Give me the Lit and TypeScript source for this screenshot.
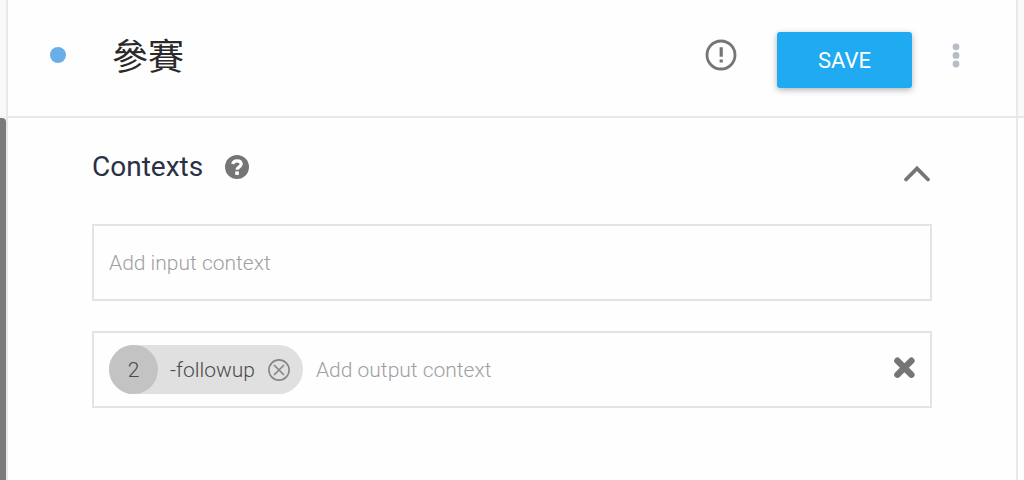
import { LitElement, html, css, svg } from "lit";
import { customElement, property } from "lit/decorators.js";

const icons = {
  error: svg`<circle cx="16" cy="16" r="14" fill="none" stroke="#757575" stroke-width="2.800"/>
    <path d="M14.600 8.300h3.200v9.500h-3.200zM14.600 20.5h3.200v3h-3.200z" fill="#757575"/>`,
  more: svg`<g fill="#b7bcc6"><circle cx="16" cy="7.800" r="3.400"/><circle cx="16" cy="16.400" r="3.400"/><circle cx="16" cy="25" r="3.400"/></g>`,
  chevron: svg`<path d="M5 21.5 16 10.500 27 21.5" fill="none" stroke="#757575" stroke-width="3.800" stroke-linecap="round"/>`,
};

@customElement("context-chip")
export class ContextChip extends LitElement {
  @property() lifespan = "";
  @property() name = "";

  static styles = css`
    :host { display: flex; align-items: center; height: 49px; border-radius: 25px; background: #e0e0e0; color: #4a4a4a; }
    .lifespan { display: grid; place-items: center; width: 49px; height: 49px; border-radius: 50%; background: #c3c3c3; }
    .name { margin: 0 13px 0 12px; white-space: nowrap; }
    .remove { display: block; margin: 0 13px 0 0; padding: 0; border: 0; background: none; cursor: pointer; }
    .remove svg { display: block; }
  `;

  render() {
    return html`
      <span class="lifespan">${this.lifespan}</span>
      <span class="name">${this.name}</span>
      <button class="remove" aria-label="Remove ${this.name}">
        <svg width="22" height="22" viewBox="0 0 22 22" fill="none" stroke="#858585" stroke-width="1.6">
          <circle cx="11" cy="11" r="10.100"/>
          <path d="M6 6l10 10M16 6L6 16"/>
        </svg>
      </button>
    `;
  }
}

@customElement("app-root")
export class AppRoot extends LitElement {
  static styles = css`
    * { box-sizing: border-box; }
    :host {
      display: grid;
      grid-template-columns: 6px 1fr 6px;
      grid-template-rows: auto 1fr;
      min-height: 100vh;
      background: #fefefe;
      font-family: Roboto, "Noto Sans CJK TC", sans-serif;
      font-size: 22px;
      line-height: 28px;
    }
    svg { display: block; }
    button { font: inherit; }
    .edge { border-bottom: 2px solid #e8e8e8; background: #f9f9f9; }
    .edge.start { border-bottom-color: #f2f2f2; }
    .rail { background: #7b7b7b; border-radius: 0 4px 0 0; }
    .bar {
      display: flex;
      align-items: center;
      height: 118px;
      padding: 0 44px 6px 42px;
      border: solid #e8e8e8;
      border-width: 0 2px 2px;
    }
    .status { width: 16px; height: 16px; margin-right: 46px; border-radius: 50%; background: #69aee6; }
    .title { flex: 1; margin: 0; padding-top: 6px; font-size: 36px; line-height: 48px; font-weight: 400; color: #2a2a2a; }
    .plain { padding: 0; border: 0; background: none; cursor: pointer; }
    .save {
      width: 135px;
      height: 56px;
      margin: 10px 28px 0 40px;
      padding: 2px 0 0;
      border: 0;
      border-radius: 3px;
      background: #20aaf2;
      color: #fff;
      box-shadow: 0 2px 6px rgba(0, 0, 0, 0.3);
      cursor: pointer;
    }
    .content { padding: 31px 84px 40px; border: solid #e8e8e8; border-width: 0 2px; }
    .head { display: flex; align-items: center; height: 36px; margin-bottom: 39px; }
    .heading { margin: 0 22px 0 0; font-size: 28px; line-height: 36px; font-weight: 400; color: #2b3144; }
    .toggle { margin: 14px 0 0 auto; }
    .field {
      display: flex;
      align-items: center;
      gap: 13px;
      height: 77px;
      margin-bottom: 30px;
      padding: 0 15px;
      border: 2px solid #e3e4e5;
      font-size: 21px;
      font-weight: 300;
    }
    .input { flex: 1; min-width: 0; padding: 0; border: 0; outline: 0; background: none; font: inherit; color: #4a4a4a; }
    .input::placeholder { color: #a0a0a0; opacity: 1; }
  `;

  render() {
    return html`
      <div class="edge start"></div>
      <header class="bar">
        <span class="status"></span>
        <h1 class="title" lang="zh-Hant">參賽</h1>
        <button class="plain" aria-label="Issues">
          <svg width="32" height="32" viewBox="0 0 32 32">${icons.error}</svg>
        </button>
        <button class="save">SAVE</button>
        <button class="plain" aria-label="More options">
          <svg width="32" height="32" viewBox="0 0 32 32">${icons.more}</svg>
        </button>
      </header>
      <div class="edge"></div>
      <div class="rail"></div>
      <main class="content">
        <div class="head">
          <h2 class="heading">Contexts</h2>
          <button class="plain" aria-label="Help">
            <svg width="24" height="24" viewBox="0 0 24 24">
              <circle cx="12" cy="12" r="12" fill="#757575"/>
              <path d="M7.600 9.100C8.300 6.900 9.800 5.800 12 5.800c2.500 0 4.200 1.300 4.200 3.300 0 3-4.200 2.900-4.200 5.700" fill="none" stroke="#fff" stroke-width="3.200"/>
              <path d="M10.200 16.400h3.700v3.500h-3.700z" fill="#fff"/>
            </svg>
          </button>
          <button class="plain toggle" aria-label="Collapse contexts">
            <svg width="30" height="32" viewBox="1 0 30 32">${icons.chevron}</svg>
          </button>
        </div>
        <div class="field">
          <input class="input" aria-label="Input context" placeholder="Add input context" />
        </div>
        <div class="field">
          <context-chip lifespan="2" name="-followup"></context-chip>
          <input class="input" aria-label="Output context" placeholder="Add output context" />
          <button class="plain" aria-label="Clear output contexts">
            <svg width="22" height="28" viewBox="0 2 22 28">
              <path d="M4.400 6.700 18.400 20.700M18.400 6.700 4.400 20.700" stroke="#757575" stroke-width="6.400" stroke-linecap="round"/>
            </svg>
          </button>
        </div>
      </main>
      <div></div>
    `;
  }
}
